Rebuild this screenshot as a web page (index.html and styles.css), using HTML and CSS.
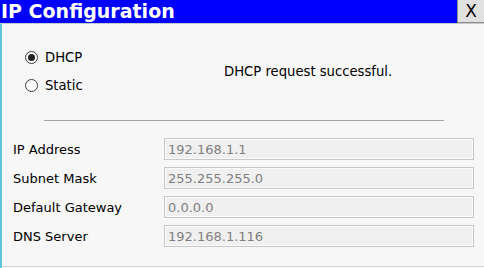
FILE: index.html
```html
<!DOCTYPE html>
<html lang="en">
<head>
  <meta charset="UTF-8">
  <meta name="viewport" content="width=device-width, initial-scale=1.0">
  <title>IP Configuration</title>
  <link rel="stylesheet" href="styles.css">
</head>
<body>

  <div class="window">
    <div class="titlebar">
      <span class="title">IP Configuration</span>
      <button type="button" class="close-btn">X</button>
    </div>

    <div class="frame">
      <div class="dialog-body">
        <div class="mode-row">
          <div class="modes">
            <label class="mode">
              <input type="radio" name="mode" value="dhcp" checked>
              <span>DHCP</span>
            </label>
            <label class="mode">
              <input type="radio" name="mode" value="static">
              <span>Static</span>
            </label>
          </div>
          <div class="status">DHCP request successful.</div>
        </div>

        <hr class="divider">

        <div class="fields">
          <label for="f_ip">IP Address</label>
          <input type="text" id="f_ip" value="192.168.1.1" disabled>

          <label for="f_mask">Subnet Mask</label>
          <input type="text" id="f_mask" value="255.255.255.0" disabled>

          <label for="f_gw">Default Gateway</label>
          <input type="text" id="f_gw" value="0.0.0.0" disabled>

          <label for="f_dns">DNS Server</label>
          <input type="text" id="f_dns" value="192.168.1.116" disabled>
        </div>
      </div>
    </div>
  </div>

</body>
</html>
```

FILE: styles.css
```css
body {
  margin: 0;
  font-family: "DejaVu Sans", Verdana, sans-serif;
  font-size: 13px;
  color: #000;
  background: #f7f7f7;
}
.window {
  width: 484px;
  height: 268px;
  display: flex;
  flex-direction: column;
  overflow: hidden;
}
.titlebar {
  height: 23px;
  flex: none;
  display: flex;
  align-items: flex-start;
  background: #0000ff;
  border-bottom: 1px solid #c8c8d0;
}
.title {
  flex: 1;
  padding-left: 1px;
  color: #fff;
  font-weight: bold;
  font-size: 19px;
  line-height: 23px;
}
.close-btn {
  width: 27px;
  height: 23px;
  padding: 0;
  background: #e1e1e1;
  border: none;
  border-left: 1px solid #8c8c8c;
  border-bottom: 1px solid #8c8c8c;
  font-family: "DejaVu Sans", sans-serif;
  font-size: 17px;
  line-height: 21px;
  color: #000;
}
.frame {
  flex: 1;
  display: flex;
  flex-direction: column;
  border-left: 2px solid #5ec4d8;
  padding-bottom: 1px;
}
.dialog-body {
  flex: 1;
  border-bottom: 1px solid #d4d4d4;
  padding-top: 19px;
}
.mode-row {
  display: flex;
  align-items: center;
  padding-left: 23px;
}
.modes {
  width: 199px;
}
.status {
  font-size: 13.2px;
}
.mode {
  height: 28px;
  display: flex;
  align-items: center;
  gap: 7px;
  font-size: 13.2px;
}
.mode input {
  appearance: none;
  -webkit-appearance: none;
  margin: 0;
  width: 13px;
  height: 13px;
  border: 1px solid #3c3c3c;
  border-radius: 50%;
  background: #fff;
  display: grid;
  place-content: center;
}
.mode input:checked::before {
  content: "";
  width: 7px;
  height: 7px;
  border-radius: 50%;
  background: #222;
}
.divider {
  width: 400px;
  margin: 21px 0 0 42px;
  border: none;
  border-top: 1px solid #a0a0a0;
}
.fields {
  margin-top: 17px;
  padding-left: 11px;
  display: grid;
  grid-template-columns: 151px 310px;
  grid-auto-rows: 22px;
  row-gap: 7px;
  align-items: center;
}
.fields input {
  box-sizing: border-box;
  height: 22px;
  margin: 0;
  padding: 0 3px;
  border: 1px solid #c8c8c8;
  box-shadow: inset 0 0 0 1px #fafafa;
  background: #f0f0f0;
  font-family: "DejaVu Sans", Verdana, sans-serif;
  font-size: 13px;
  color: #808080;
}
```
